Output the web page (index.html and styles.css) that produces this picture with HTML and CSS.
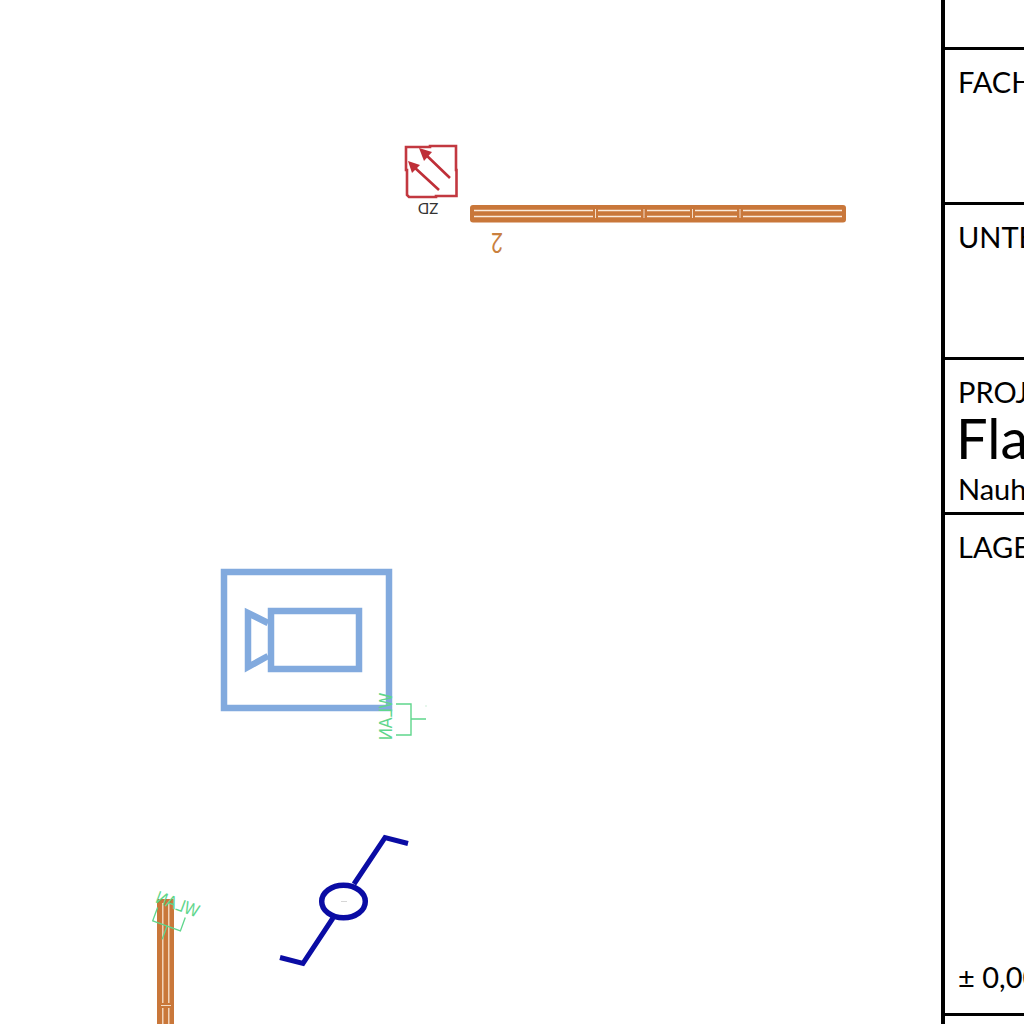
FILE: index.html
```html
<!DOCTYPE html>
<html lang="de">
<head>
<meta charset="utf-8">
<title>Plan</title>
<link rel="stylesheet" href="styles.css">
</head>
<body>
<main class="sheet">
  <svg class="plan" width="941" height="1024" viewBox="0 0 941 1024" xmlns="http://www.w3.org/2000/svg">
    <defs>
      <g id="wlan">
        <text class="wlan-text" transform="translate(-19 -26) rotate(90) scale(1 -1)" textLength="47" lengthAdjust="spacingAndGlyphs">WLAN</text>
        <path class="wlan-line" d="M-15 -15H0V16H-15M0 0H15"/>
      </g>
    </defs>

    <!-- Verteiler ZD -->
    <path class="zd-box" d="M406 147H430L430 146H456V170L456.500 170V196H436V197H409L407 195V170L406 170Z"/>
    <path class="zd-arrow" d="M439 190L414 167M450 178L425 154"/>
    <path class="zd-head" d="M408 161L420 165L412 173Z"/>
    <path class="zd-head" d="M419 148L432 152L424 161Z"/>
    <text class="zd-label" transform="rotate(180 428 208)" x="428" y="213.500">ZD</text>

    <!-- horizontale Trasse -->
    <rect class="duct" x="470" y="205" width="376" height="17.500" rx="3"/>
    <path class="duct-gap" d="M474 210.500H842M474 216.500H842"/>
    <rect class="duct" x="593" y="207" width="5" height="13"/>
    <rect class="duct" x="641" y="207" width="6" height="13"/>
    <rect class="duct" x="690" y="207" width="5" height="13"/>
    <rect class="duct" x="737" y="207" width="6" height="13"/>
    <path class="duct-slit" d="M595.500 209V218M644 209V218M692.500 209V218M740 209V218"/>
    <text class="duct-label" transform="rotate(180 497 242)" x="497" y="251" textLength="12" lengthAdjust="spacingAndGlyphs">2</text>

    <!-- Kamera -->
    <rect class="cam" x="224" y="572" width="165" height="136"/>
    <rect class="cam" x="271" y="611" width="88" height="58"/>
    <path class="cam" d="M268 623L248 613V667L268 656"/>
    <use href="#wlan" transform="translate(411 719)"/>
    <circle class="wlan-dot" cx="426" cy="706" r=".7"/>

    <!-- vertikale Trasse -->
    <rect class="duct" x="157" y="899" width="17" height="130" rx="1"/>
    <path class="duct-gap-thin" d="M162.800 903V1030M168.800 903V1030"/>
    <rect class="duct" x="159" y="1003" width="13" height="5"/>
    <path class="duct-slit" d="M161 1005.500H171"/>
    <use href="#wlan" transform="translate(167 926) rotate(110) scale(.95)"/>

    <!-- Symbol blau -->
    <path class="valve-line" d="M280 957.500L303 963.500L333 918M354 884L385 837.500L408 843.500"/>
    <ellipse class="valve-ring" cx="343.500" cy="901.500" rx="21.800" ry="16.300"/>
    <path class="valve-dot" d="M341 901.500H347"/>
  </svg>

  <aside class="title-block">
    <section class="row row-top"></section>
    <section class="row row-fach"><p class="label">FACHPLANER</p></section>
    <section class="row row-unter"><p class="label">UNTERNEHMER</p></section>
    <section class="row row-projekt">
      <p class="label">PROJEKT</p>
      <p class="project-name">Flachdach</p>
      <p class="label project-place">Nauheim</p>
    </section>
    <section class="row row-lage">
      <p class="label">LAGEPLAN</p>
      <p class="label">± 0,00</p>
    </section>
    <section class="row row-end"></section>
  </aside>
</main>
</body>
</html>
```
FILE: styles.css
```css
* { box-sizing: border-box; }

html, body {
  margin: 0;
  height: 100%;
  background: #fff;
  overflow: hidden;
}

.sheet {
  display: grid;
  grid-template-columns: 941px 420px;
  width: 1024px;
  height: 1024px;
  overflow: hidden;
  font-family: Lato, "Open Sans", sans-serif;
  color: #000;
}

.plan { display: block; }

.title-block {
  display: grid;
  grid-template-rows: 50px 155px 155px 155px 501px 8px;
  height: 1024px;
  border-left: 4px solid #000;
}

.row {
  display: flex;
  flex-direction: column;
  padding: 18px 0 0 13px;
  border-bottom: 3px solid #000;
  overflow: hidden;
}

.row-top, .row-end { padding: 0; }
.row-end { border-bottom: 0; }

.row-lage {
  justify-content: space-between;
  padding-bottom: 22px;
}

.label {
  margin: 0;
  font-size: 29px;
  line-height: 28px;
  white-space: nowrap;
}

.project-name {
  margin: 3px 0 0 -2px;
  font-size: 56px;
  line-height: 58px;
  white-space: nowrap;
}

.project-place { margin-top: 8px; }

.zd-box { fill: none; stroke: #c23840; stroke-width: 2.600; }
.zd-arrow { fill: none; stroke: #bf2f38; stroke-width: 2.600; }
.zd-head { fill: #bf2f38; }
.zd-label { font-family: Lato, sans-serif; font-size: 15px; fill: #333; text-anchor: middle; }

.duct { fill: #c9773a; }
.duct-gap { fill: none; stroke: #fbeadb; stroke-width: 1.600; }
.duct-gap-thin { fill: none; stroke: #f8e2cf; stroke-width: 1.300; }
.duct-slit { fill: none; stroke: #f3dcc8; stroke-width: 1; }
.duct-label { font-family: Lato, sans-serif; font-size: 27px; fill: #c9803f; text-anchor: middle; }

.cam { fill: none; stroke: #82aade; stroke-width: 6.500; }

.wlan-text { font-family: "Liberation Sans", sans-serif; font-size: 19px; fill: #5fd68c; }
.wlan-line { fill: none; stroke: #5fd68c; stroke-width: 1.400; }
.wlan-dot { fill: #b9e8cb; }

.valve-line { fill: none; stroke: #0a0ca4; stroke-width: 5; }
.valve-ring { fill: none; stroke: #0a0ca4; stroke-width: 5.500; }
.valve-dot { fill: none; stroke: #d6d6d6; stroke-width: 1; }
```
